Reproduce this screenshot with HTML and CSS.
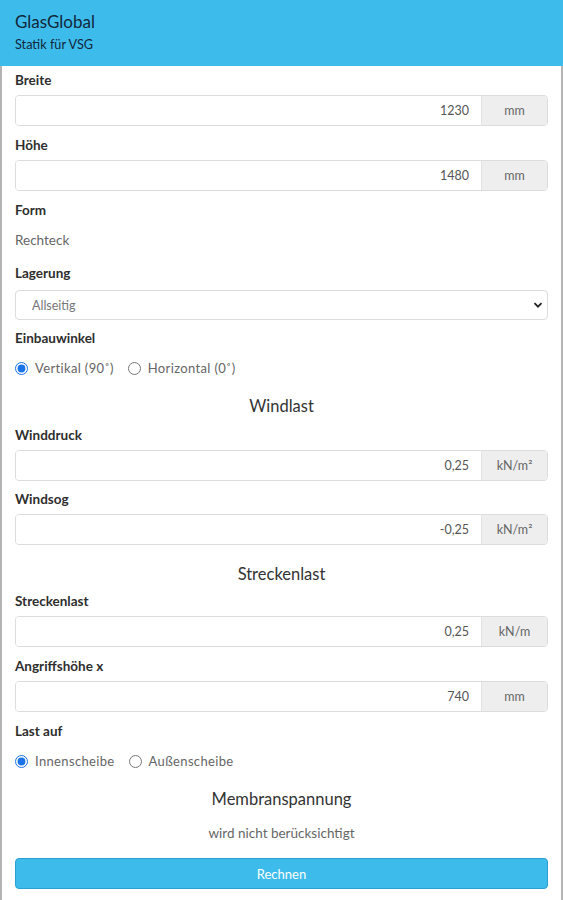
FILE: index.html
```html
<!DOCTYPE html>
<html lang="de">
<head>
<meta charset="utf-8">
<title>GlasGlobal</title>
<link rel="stylesheet" href="styles.css">
</head>
<body>
<header class="topbar">
  <div class="brand">GlasGlobal</div>
  <div class="tagline">Statik für VSG</div>
</header>
<main class="page">
  <div class="group">
    <label class="lbl">Breite</label>
    <div class="field"><input class="num" type="text" value="1230"><span class="unit">mm</span></div>
  </div>
  <div class="group">
    <label class="lbl">Höhe</label>
    <div class="field"><input class="num" type="text" value="1480"><span class="unit">mm</span></div>
  </div>
  <div class="group">
    <label class="lbl">Form</label>
    <div class="static">Rechteck</div>
  </div>
  <div class="group group-select">
    <label class="lbl">Lagerung</label>
    <div class="selwrap">
      <select class="sel"><option>Allseitig</option></select>
      <svg class="chev" width="10" height="8" viewBox="0 0 10 8"><path d="M1.5 2.2 L5 5.7 L8.5 2.2" fill="none" stroke="#222" stroke-width="1.8"/></svg>
    </div>
  </div>
  <div class="group">
    <label class="lbl">Einbauwinkel</label>
    <div class="radios">
      <label class="opt"><input type="radio" name="w" checked><span>Vertikal (90˚)</span></label>
      <label class="opt"><input type="radio" name="w"><span>Horizontal (0˚)</span></label>
    </div>
  </div>
  <h2 class="section">Windlast</h2>
  <div class="group group-tight">
    <label class="lbl">Winddruck</label>
    <div class="field"><input class="num" type="text" value="0,25"><span class="unit">kN/m²</span></div>
  </div>
  <div class="group">
    <label class="lbl">Windsog</label>
    <div class="field"><input class="num" type="text" value="-0,25"><span class="unit">kN/m²</span></div>
  </div>
  <h2 class="section section-tight">Streckenlast</h2>
  <div class="group">
    <label class="lbl">Streckenlast</label>
    <div class="field"><input class="num" type="text" value="0,25"><span class="unit">kN/m</span></div>
  </div>
  <div class="group">
    <label class="lbl">Angriffshöhe x</label>
    <div class="field"><input class="num" type="text" value="740"><span class="unit">mm</span></div>
  </div>
  <div class="group">
    <label class="lbl">Last auf</label>
    <div class="radios">
      <label class="opt"><input type="radio" name="l" checked><span>Innenscheibe</span></label>
      <label class="opt"><input type="radio" name="l"><span>Außenscheibe</span></label>
    </div>
  </div>
  <h2 class="section">Membranspannung</h2>
  <p class="note">wird nicht berücksichtigt</p>
  <button class="btn" type="button">Rechnen</button>
</main>
</body>
</html>
```
FILE: styles.css
```css
* { box-sizing: border-box; }
html, body { margin: 0; padding: 0; }
body {
  font-family: Lato, "Noto Sans", sans-serif;
  color: #222;
  background: #fff;
  width: 563px;
  min-height: 900px;
}
.topbar {
  background: #3dbcec;
  height: 66px;
  padding: 12px 15px 0;
  color: #13263a;
}
.brand { font-size: 17px; line-height: 20px; }
.tagline { font-size: 12.7px; line-height: 16px; margin-top: 4px; }
.page {
  border-left: 2px solid #b4b4b4;
  border-right: 2px solid #b4b4b4;
  padding: 5px 13px 11px;
  min-height: 834px;
}
.group { margin-bottom: 10px; }
.group-tight { margin-bottom: 9px; }
.lbl {
  display: block;
  font-size: 13.5px;
  font-weight: 700;
  line-height: 18px;
  margin-bottom: 6px;
  color: #2e2e2e;
}
.field {
  display: flex;
  height: 31px;
  border: 1px solid #dcdcdc;
  border-radius: 4px;
  overflow: hidden;
}
.num {
  flex: 1;
  min-width: 0;
  border: 0;
  padding: 0 12px;
  text-align: right;
  font: 12.5px Lato, "Noto Sans", sans-serif;
  color: #555;
  background: #fff;
  outline: none;
}
.unit {
  width: 66px;
  flex: none;
  background: #eeeeee;
  border-left: 1px solid #e2e2e2;
  display: flex;
  align-items: center;
  justify-content: center;
  font-size: 12.5px;
  color: #666;
}
.static {
  font-size: 13.5px;
  line-height: 18px;
  color: #666;
  margin-top: 12px;
  margin-bottom: 15px;
}
.group-select { margin-bottom: 9px; }
.group-select .lbl { margin-bottom: 8px; }
.selwrap { position: relative; }
.sel {
  appearance: none;
  -webkit-appearance: none;
  width: 100%;
  height: 30px;
  border: 1px solid #dcdcdc;
  border-radius: 4px;
  background: #fff;
  padding: 0 16px;
  font: 12.5px Lato, "Noto Sans", sans-serif;
  color: #777;
}
.chev { position: absolute; right: 5px; top: 11px; }
.radios {
  display: flex;
  gap: 14px;
  margin-top: 12px;
  height: 18px;
  align-items: center;
}
.opt {
  display: flex;
  align-items: center;
  gap: 7px;
  font-size: 13px;
  letter-spacing: 0.35px;
  color: #666;
}
.opt input {
  margin: 0;
  width: 13px;
  height: 13px;
  accent-color: #1a73e8;
}
.section {
  margin: 18px 0 9px;
  font-size: 16.5px;
  line-height: 22px;
  font-weight: 400;
  text-align: center;
  color: #333;
}
.section-tight { margin-bottom: 7px; }
.note {
  margin: 14px 0 16px;
  font-size: 13.5px;
  line-height: 18px;
  text-align: center;
  color: #666;
}
.btn {
  display: block;
  width: 100%;
  height: 31px;
  background: #3dbcec;
  border: 1px solid #2a9fd3;
  border-radius: 4px;
  color: #fff;
  font: 13px Lato, "Noto Sans", sans-serif;
}
```
